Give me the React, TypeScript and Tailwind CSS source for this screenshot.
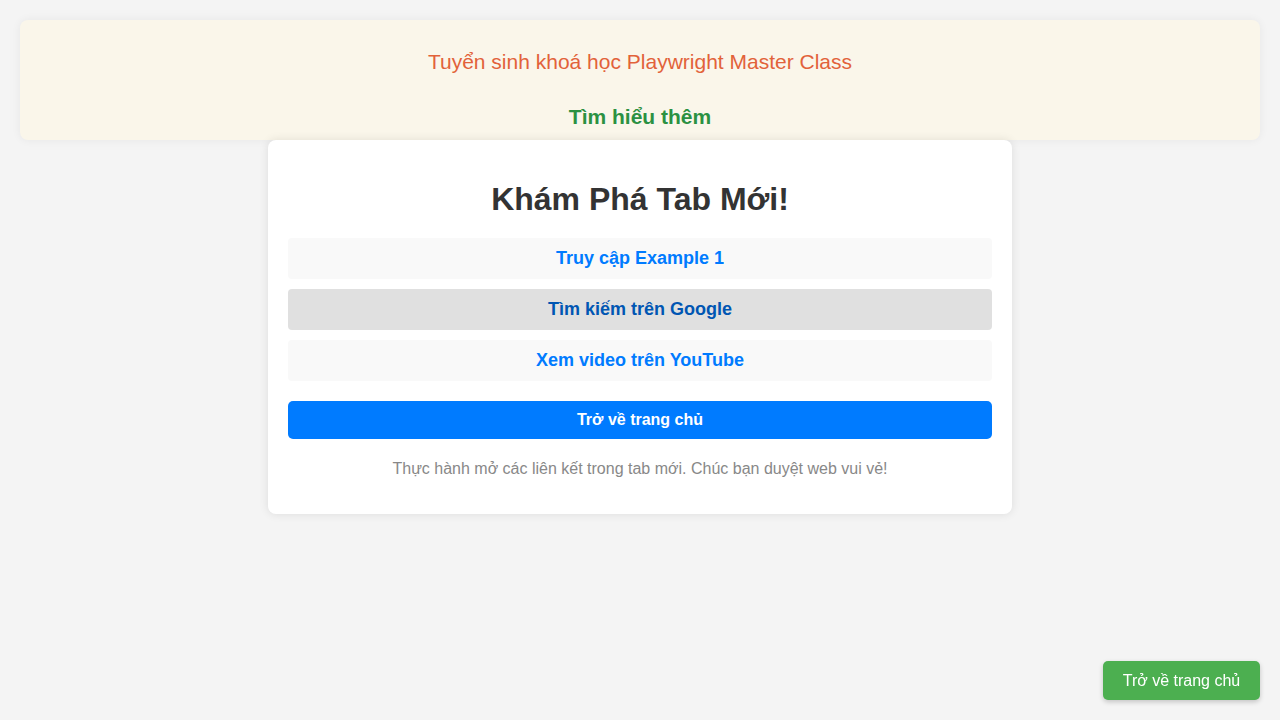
import React from 'react';

const links = [
    { label: 'Truy cập Example 1', hover: false },
    { label: 'Tìm kiếm trên Google', hover: true },
    { label: 'Xem video trên YouTube', hover: false },
];

export default function App() {
    return (
        <div className="min-h-screen bg-[#f4f4f4] p-5 font-['Liberation_Sans',Arial,sans-serif]">
            <div className="h-[120px] rounded-lg bg-[#faf6ea] shadow-[0_0_10px_rgba(0,0,0,0.06)] flex flex-col items-center pt-[30px]">
                <p className="text-[21px] leading-[24px] text-[#e2623a]">Tuyển sinh khoá học Playwright Master Class</p>
                <a className="mt-[31px] text-[21px] leading-[24px] font-bold text-[#2b9142]">Tìm hiểu thêm</a>
            </div>

            <div className="mx-auto w-[744px] rounded-lg bg-white px-5 pb-[36px] shadow-[0_0_10px_rgba(0,0,0,0.1)]">
                <h1 className="pt-[41px] pb-[20px] text-center text-[32px] leading-[37px] font-bold text-[#333]">Khám Phá Tab Mới!</h1>
                <div className="flex flex-col gap-[10px]">
                    {links.map((l) => (
                        <a
                            key={l.label}
                            className={
                                l.hover
                                    ? 'flex h-[41px] items-center justify-center rounded bg-[#e0e0e0] text-[18px] font-bold text-[#0056b3]'
                                    : 'flex h-[41px] items-center justify-center rounded bg-[#f9f9f9] text-[18px] font-bold text-[#007bff]'
                            }
                        >
                            {l.label}
                        </a>
                    ))}
                </div>
                <button className="mt-[20px] flex h-[38px] w-full items-center justify-center rounded-[5px] bg-[#007bff] text-base font-bold text-white">
                    Trở về trang chủ
                </button>
                <p className="mt-[21px] text-center text-base leading-[18px] text-[#888]">
                    Thực hành mở các liên kết trong tab mới. Chúc bạn duyệt web vui vẻ!
                </p>
            </div>

            <button className="fixed right-5 bottom-5 h-[39px] w-[157px] rounded-[5px] bg-[#4caf50] text-base text-white shadow-[0_2px_5px_rgba(0,0,0,0.2)]">
                Trở về trang chủ
            </button>
        </div>
    );
}
